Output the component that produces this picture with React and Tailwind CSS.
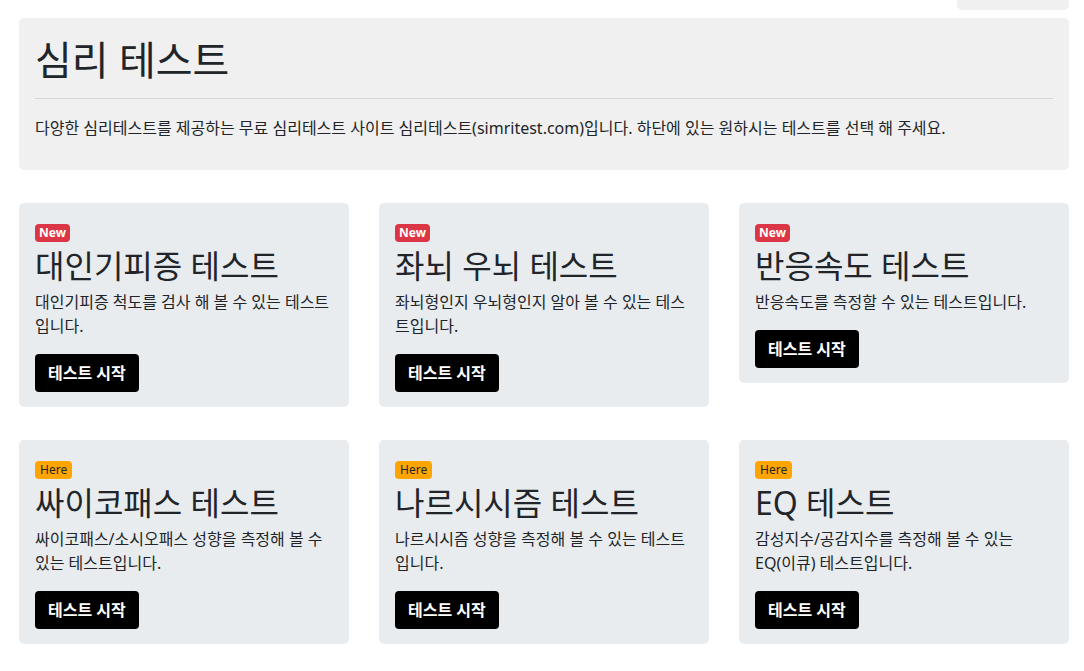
import React from 'react'

const tests = [
  { badge: 'New', title: '대인기피증 테스트', desc: '대인기피증 척도를 검사 해 볼 수 있는 테스트입니다.' },
  { badge: 'New', title: '좌뇌 우뇌 테스트', desc: '좌뇌형인지 우뇌형인지 알아 볼 수 있는 테스트입니다.' },
  { badge: 'New', title: '반응속도 테스트', desc: '반응속도를 측정할 수 있는 테스트입니다.' },
  { badge: 'Here', title: '싸이코패스 테스트', desc: '싸이코패스/소시오패스 성향을 측정해 볼 수 있는 테스트입니다.' },
  { badge: 'Here', title: '나르시시즘 테스트', desc: '나르시시즘 성향을 측정해 볼 수 있는 테스트입니다.' },
  {
    badge: 'Here',
    title: 'EQ 테스트',
    desc: (
      <>
        감성지수/공감지수를 측정해 볼 수 있는 <span className="whitespace-nowrap">EQ(이큐)</span> 테스트입니다.
      </>
    )
  }
]

const TestCard = ({ badge, title, desc }) => {
  const isNew = badge === 'New'
  return (
    <div className="bg-[#e9ecef] rounded-[5px] px-4 pt-[21px] pb-[15px]">
      {/* Badge */}
      <div className="flex">
        <span
          className={`flex items-center h-[18px] rounded-[4px] text-[12px] leading-none ${
            isNew ? 'px-[4px] bg-[#dc3545] text-white font-bold' : 'px-[5px] bg-[#ffa500] text-[#212529]'
          }`}
        >
          {badge}
        </span>
      </div>
      <h3 className="text-[32px] leading-[48px] text-[#212529]">{title}</h3>
      <p className="text-[16px] leading-[24px] text-[#212529] break-all">{desc}</p>
      <button className="mt-4 h-[38px] px-[13px] bg-black text-white text-[16px] font-semibold rounded-[4px]">
        테스트 시작
      </button>
    </div>
  )
}

export default function App() {
  return (
    <div
      className="min-h-screen bg-white pl-[19px] pr-[15px] pb-6"
      style={{ fontFamily: '"Noto Sans", "Noto Sans CJK KR", sans-serif' }}
    >
      {/* top-right nav stub */}
      <div className="flex justify-end">
        <div className="w-[112px] h-[10px] bg-[#f0f0f0] rounded-b-[5px]" />
      </div>

      {/* Jumbotron */}
      <div className="mt-2 bg-[#f0f0f0] rounded-[5px] px-4 pt-[18px] pb-[30px]">
        <h1 className="text-[40px] leading-[48px] text-[#212529]">심리 테스트</h1>
        <hr className="mt-[14px] border-t border-[#d6d6d6]" />
        <p className="mt-[17px] text-[16px] leading-[24px] text-[#212529]">
          다양한 심리테스트를 제공하는 무료 심리테스트 사이트 심리테스트(simritest.com)입니다. 하단에 있는 원하시는 테스트를 선택 해 주세요.
        </p>
      </div>

      {/* Cards */}
      <div className="mt-[33px] flex flex-col gap-y-[33px]">
        <div className="grid grid-cols-3 gap-x-[30px] items-start">
          {tests.slice(0, 3).map((t) => (
            <TestCard key={t.title} {...t} />
          ))}
        </div>
        <div className="grid grid-cols-3 gap-x-[30px] items-start">
          {tests.slice(3).map((t) => (
            <TestCard key={t.title} {...t} />
          ))}
        </div>
      </div>
    </div>
  )
}
